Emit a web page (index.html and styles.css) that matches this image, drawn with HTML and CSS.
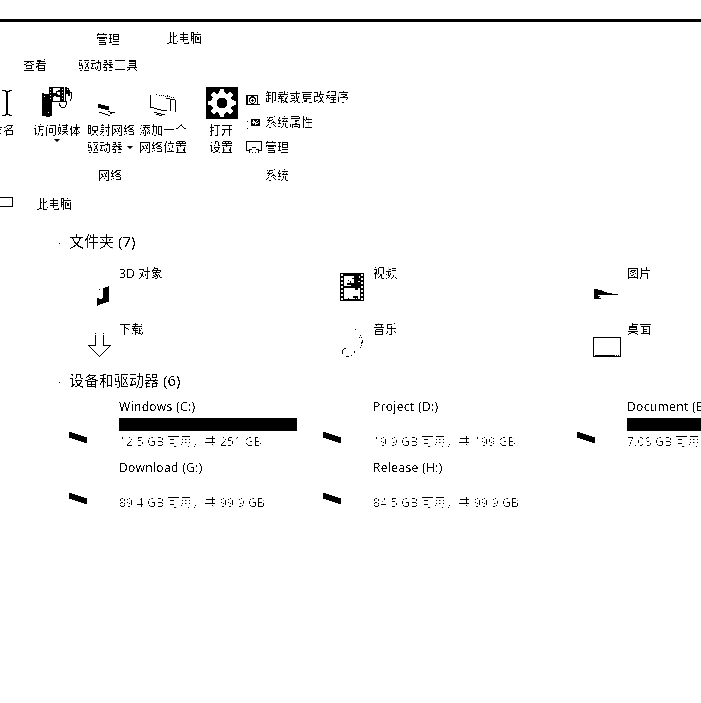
FILE: index.html
```html
<!DOCTYPE html>
<html lang="zh-CN">
<head>
<meta charset="utf-8">
<title>此电脑</title>
<link rel="stylesheet" href="styles.css">
</head>
<body>
<div class="window">
  <header class="titlebar"><span class="context-tab">管理</span><span class="window-title">此电脑</span></header>
  <nav class="tabs"><span>查看</span><span>驱动器工具</span></nav>
  <section class="ribbon">
    <div class="tool rename">
      <svg width="36" height="38" viewBox="-21 84 36 38"><path class="line" d="M2 90.5h3l1 1h3l1-1h2M2 115.500h3l1-1h3l1 1h2"/><path d="M6 91h2v24h-2z"/></svg>
      <span>重命名</span>
    </div>
    <div class="tool media">
      <svg width="48" height="38" viewBox="33 84 48 38">
        <path d="M42 93h2v1h5v-7h15v15h-12v14h-2v1h-4v-1h-4z"/>
        <path class="paper" d="M50 89h1v1h-1zm0 3h1v1h-1zm0 3h1v1h-1zm0 3h1v1h-1zM62 89h1v1h-1zm0 3h1v1h-1zm0 3h1v1h-1zm0 3h1v1h-1zM53 88h7v2h-2v1h-2v2h-3zM53 97h1v-1h2v1h4v4h-7zM57 92h3v3h-2v-1h-1zM44 96h1v1h-1zM48 112h1v1h-1z"/>
        <path class="line" d="M65.500 87v14M66 88.500h2v2h1v2h2.500v6l-2 3M59.500 103v2l2 2.500h3l2-3v-3h-3"/>
        <path d="M66 87h1v3h2v3h1v3h-2v-2h-2z"/>
      </svg>
      <span>访问媒体</span><i class="caret"></i>
    </div>
    <div class="tool map-drive">
      <svg width="48" height="38" viewBox="87 84 48 38"><path d="M98 104h3v1h4v1h4v4h-4v-1h-4v-1h-3z"/><path class="line" d="M99 112.500h3m0 1h3m0 1h3m0 1h2M108 111.500h2m0 1h2m0 0h3M110 113.500h2"/></svg>
      <span>映射网络</span><span class="with-caret">驱动器<i class="caret"></i></span>
    </div>
    <div class="tool add-place">
      <svg width="48" height="38" viewBox="139 84 48 38"><path class="line" d="M150.500 95v13M151 107.500h3m0 1h3m0 1h4m0 1h6M154 112.500h3m0 1h4m0 1h4M156 114.500h3m0 1h3M166 98.500h4M170.500 99v12M170 99.500h5M175.500 100v12"/><path class="line dotted" d="M156 94.500h2m1 1h5m1 1h5m-3-1h2m2 2h4"/></svg>
      <span>添加一个</span><span>网络位置</span>
    </div>
    <div class="tool settings">
      <svg width="32" height="38" viewBox="206 84 32 38"><path d="M206 87h32v32h-32z"/><g class="paper" transform="translate(222 103)"><circle r="10.500"/><path id="tooth" d="M-3-9l1-5h4l1 5v18l-1 5h-4l-1-5z"/><use href="#tooth" transform="rotate(45)"/><use href="#tooth" transform="rotate(90)"/><use href="#tooth" transform="rotate(135)"/></g><circle cx="222" cy="103" r="5.500"/></svg>
      <span>打开</span><span>设置</span>
    </div>
    <div class="tool-list">
      <div><svg width="19" height="25" viewBox="246 86 19 25"><path d="M246 95h12v9h2v1h-14z"/><path class="paper" d="M248 96h3v1h-1v1h-1v4h1v1h1v1h-3zM257 96h-3v1h1v1h1v4h-1v1h-1v1h3zM251 98h3v1h1v3h-1v1h-3v-1h-1v-3h1z"/><path d="M251 100h3v1h-3zM252 99h1v3h-1z"/></svg><span>卸载或更改程序</span></div>
      <div><svg width="19" height="25" viewBox="246 111 19 25"><path d="M251 119h9v7h-9zM247 121h1v1h-1zm0 7h1v1h-1z"/><path class="paper" d="M253 120h1v1h1v1h1v-1h1v-1h1v1h-1v1h-1v1h2v-1h1v1h-1v1h-2v1h-1v-2h-1v1h-1v-1h-1v-1h1z"/></svg><span>系统属性</span></div>
      <div><svg width="19" height="25" viewBox="246 136 19 25"><path class="line" d="M249 150.500h-2.500v-9h15v9h-2.500M249.500 149v4M258.500 149v4M252 147.500h4M250 149.500h2m4 0h2M252 152.500h1m2 0h1"/></svg><span>管理</span></div>
    </div>
  </section>
  <div class="group-names"><span>网络</span><span>系统</span></div>
  <div class="address"><svg width="14" height="12" viewBox="0 196 14 12"><path class="line" d="M0 197.500h12.500v9H0"/></svg><span>此电脑</span></div>

  <h2>文件夹 (7)</h2>
  <div class="grid folders">
    <div class="item"><svg width="50" height="56" viewBox="69 258 50 56"><path d="M103 288h2v-1h3v-1h1v16h-3v1h-3v1h-3v1h-2v1h-1v-8h2v1h3v-1h1zM99 289h1v1h-1z"/></svg><span>3D 对象</span></div>
    <div class="item"><svg width="50" height="56" viewBox="323 258 50 56"><path d="M340 273h24v28h-24z"/><path class="paper" d="M344 276h16v10h-16zM344 288h16v11h-16z"/><path class="holes" d="M342 274v26M362 274v26"/><path d="M353 275h6v3h1v3h-2v1h2v6h-2v2h-3v-2h-4v-3h-4v-2h3v-2h1v2h3v-4h-2v-1h2v-2h-1zM348 280h1v1h-1zM353 296h5v4h-1v-2h-1v2h-1v-2h-2zM348 298h1v1h-1z"/></svg><span>视频</span></div>
    <div class="item"><svg width="50" height="56" viewBox="577 258 50 56"><path d="M594 289h4v1h4v1h2v1h3v1h5v1h6v1h-20v1h2v1h-1v1h2v1h-7z"/></svg><span>图片</span></div>
    <div class="item"><svg width="50" height="56" viewBox="69 314 50 56"><path class="line" d="M95.500 335v10.500h-7l11 11 11-11h-7V335M95 333.500h1m7 0h1"/></svg><span>下载</span></div>
    <div class="item"><svg width="50" height="56" viewBox="323 314 50 56"><path d="M355 329h1v1h-1zM360 335h1v1h-1zM359 337h1v1h-1zM361 337h1v1h-1zM362 340h1v3h-1zM361 342h1v2h-1zM361 345h1v1h-1zM360 347h1v1h-1zM354 351h1v2h-1zM351 355h1v1h-1zM346 356h3v1h-3zM342 350h1v4h-1zM343 349h1v1h-1zM344 348h2v1h-2z"/></svg><span>音乐</span></div>
    <div class="item"><svg width="50" height="56" viewBox="577 314 50 56"><path class="line" d="M593.500 337.500h27v19h-27zM595 355.500h20m1 0h1m1 0h1"/></svg><span>桌面</span></div>
  </div>

  <h2 class="drives-title">设备和驱动器 (6)</h2>
  <div class="grid drives">
    <div class="item"><svg width="50" height="61" viewBox="69 397 50 61"><path id="drive" d="M69 432h3v1h3v1h3v1h3v1h3v1h3v6h-3v-1h-3v-1h-3v-1h-3v-1h-3v-1h-3z"/></svg><div><b>Windows (C:)</b><i class="bar"></i><small>12.5 GB 可用，共 251 GB</small></div></div>
    <div class="item"><svg width="50" height="61" viewBox="69 397 50 61"><use href="#drive"/></svg><div><b>Project (D:)</b><i class="bar clear"></i><small>19.9 GB 可用，共 199 GB</small></div></div>
    <div class="item"><svg width="50" height="61" viewBox="69 397 50 61"><use href="#drive"/></svg><div><b>Document (E:)</b><i class="bar"></i><small>7.08 GB 可用，共 199 GB</small></div></div>
    <div class="item"><svg width="50" height="61" viewBox="69 397 50 61"><use href="#drive"/></svg><div><b>Download (G:)</b><i class="bar clear"></i><small>89.4 GB 可用，共 99.9 GB</small></div></div>
    <div class="item"><svg width="50" height="61" viewBox="69 397 50 61"><use href="#drive"/></svg><div><b>Release (H:)</b><i class="bar clear"></i><small>84.5 GB 可用，共 99.9 GB</small></div></div>
  </div>
</div>
</body>
</html>
```
FILE: styles.css
```css
* { box-sizing: border-box; }
body { margin: 0; background: #fff; overflow: hidden; }
/* One-bit rendering: every tone resolves to black or white. */
.window {
  width: 701px; height: 703px; padding-top: 19px; overflow: hidden;
  background: #fff; color: #1c1c1c;
  font: 12px/16px "Noto Sans", "Noto Sans CJK SC", sans-serif;
  white-space: nowrap;
  filter: grayscale(1) contrast(60);
}
svg { display: block; flex: none; shape-rendering: crispEdges; }
.line { fill: none; stroke: #000; stroke-width: 1; }
.dotted { stroke-dasharray: 1 1; }
.paper { fill: #fff; }
.holes { fill: none; stroke: #fff; stroke-width: 2; stroke-dasharray: 2 2; }

.titlebar { display: flex; height: 38px; border-top: 3px solid #000; padding: 8px 0 0 96px; gap: 46px; }
.context-tab { padding-top: 2px; }
.window-title { padding-top: 1px; }
.tabs { display: flex; height: 27px; padding: 1px 0 0 23px; gap: 31px; }
.ribbon { display: flex; height: 80px; }
.tool { display: flex; flex-direction: column; align-items: center; flex: none; width: 48px; line-height: 17px; }
.rename { width: 36px; margin-left: -21px; }
.media { margin-left: 18px; }
.map-drive { margin-left: 6px; }
.add-place { margin-left: 4px; }
.settings { width: 32px; margin-left: 19px; }
.settings span { margin-left: -2px; }
.with-caret { display: flex; align-items: center; align-self: flex-start; gap: 4px; }
.caret { width: 0; height: 0; border: 3px solid transparent; border-top-color: #000; border-bottom: 0; }
.tool-list { margin: 2px 0 0 8px; }
.tool-list div { display: flex; line-height: 25px; height: 25px; }
.tool-list div span { margin-top: -1px; }
.group-names { display: flex; gap: 143px; height: 28px; padding: 4px 0 0 98px; }
.address { display: flex; gap: 22px; height: 35px; padding-top: 4px; }
.address span { padding-top: 1px; }
h2 { display: flex; align-items: center; margin: 0; height: 29px; padding-left: 59px; font-size: 15px; font-weight: 400; line-height: 29px; }
h2::before { content: ""; width: 1px; height: 1px; margin: 3px 9px 0 0; background: #000; }
.grid { display: grid; grid-template-columns: repeat(3, 254px); padding-left: 69px; }
.folders { grid-auto-rows: 56px; margin-top: 2px; }
.item { display: flex; }
.folders span { padding-top: 8px; letter-spacing: .2px; }
.drives-title { margin-top: -4px; }
.drives { grid-auto-rows: 61px; margin-top: 2px; }
.drives b { display: block; margin-top: 2px; font-weight: 400; letter-spacing: .33px; color: #000; }
.bar { display: block; width: 178px; height: 13px; margin-top: 3px; background: #000; }
.clear { background: #fff; }
.drives small { display: block; margin-top: 3px; font-size: 12px; color: #666; letter-spacing: .25px; }
```
